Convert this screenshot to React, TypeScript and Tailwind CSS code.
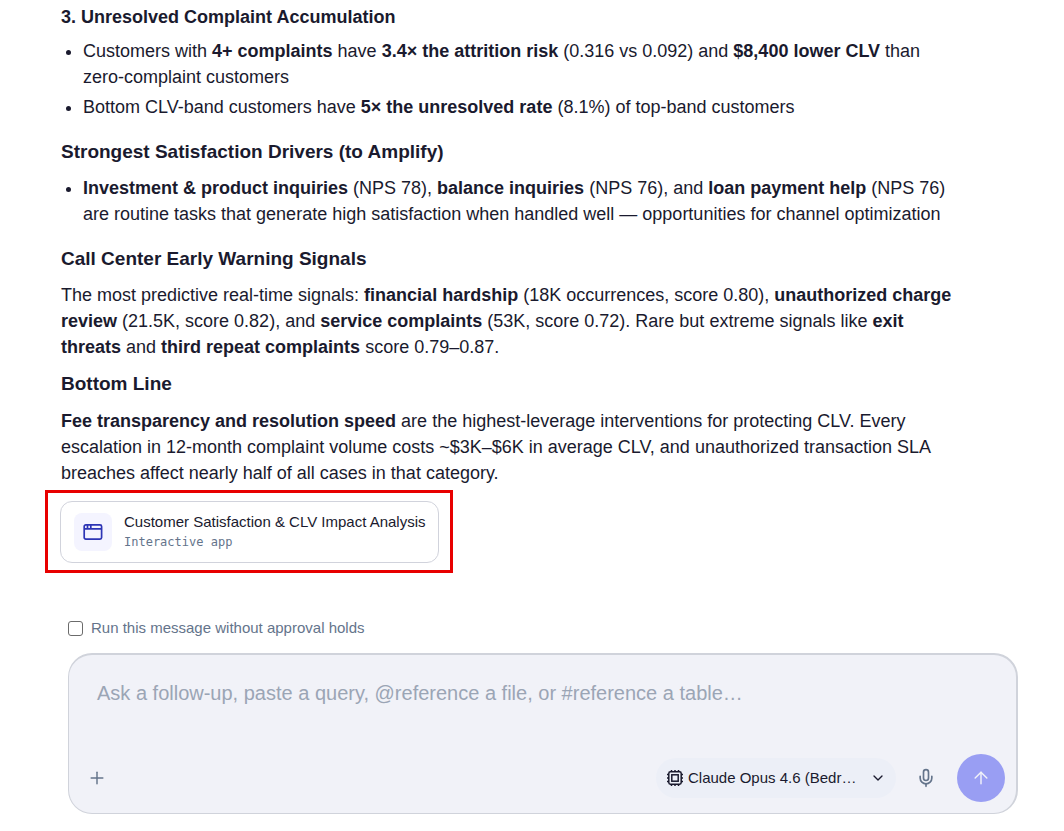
import { useState } from "react"
import type { ReactNode } from "react"
import { ArrowUp, ChevronDown, Mic, Plus } from "lucide-react"

function AppWindowIcon() {
  return (
    <svg viewBox="0 0 20 20" className="size-5" fill="none" stroke="currentColor" strokeWidth="1.7" aria-hidden="true">
      <rect x="1.2" y="2.8" width="17.4" height="14.4" rx="1.6" />
      <path d="M1.2 6.8h17.4M4.5 2.8v4M7.8 2.8v4" />
    </svg>
  )
}

function ChipIcon() {
  return (
    <svg viewBox="0 0 18 18" className="size-[18px] shrink-0" fill="none" stroke="currentColor" strokeWidth="1.5" aria-hidden="true">
      <rect x="2.8" y="2.8" width="12.4" height="12.4" rx="1.6" />
      <rect x="5.8" y="5.8" width="6.4" height="6.4" />
      <path d="M5.5 1v2M9 1v2M12.5 1v2M5.5 15v2M9 15v2M12.5 15v2M1 5.5h2M1 9h2M1 12.5h2M15 5.5h2M15 9h2M15 12.5h2" />
    </svg>
  )
}

function SectionHeading({ children }: { children: ReactNode }) {
  return <h2 className="mt-[18px] mb-[9px] text-[19px] leading-7 font-bold">{children}</h2>
}

function Bullets({ children }: { children: ReactNode }) {
  return <ul className="list-disc space-y-1 pl-[22px]">{children}</ul>
}

function Answer() {
  return (
    <article className="max-w-[896px] text-lg leading-[26px]">
      <h3 className="mb-2 font-bold">3. Unresolved Complaint Accumulation</h3>
      <Bullets>
        <li>
          Customers with <strong>4+ complaints</strong> have <strong>3.4× the attrition risk</strong> (0.316 vs 0.092) and{" "}
          <strong>$8,400 lower CLV</strong> than zero-complaint customers
        </li>
        <li>
          Bottom CLV-band customers have <strong>5× the unresolved rate</strong> (8.1%) of top-band customers
        </li>
      </Bullets>

      <SectionHeading>Strongest Satisfaction Drivers (to Amplify)</SectionHeading>
      <Bullets>
        <li>
          <strong>Investment &amp; product inquiries</strong> (NPS 78), <strong>balance inquiries</strong> (NPS 76), and{" "}
          <strong>loan payment help</strong> (NPS 76) are routine tasks that generate high satisfaction when handled well —
          opportunities for channel optimization
        </li>
      </Bullets>

      <SectionHeading>Call Center Early Warning Signals</SectionHeading>
      <p>
        The most predictive real-time signals: <strong>financial hardship</strong> (18K occurrences, score 0.80),{" "}
        <strong>unauthorized charge review</strong> (21.5K, score 0.82), and <strong>service complaints</strong> (53K, score
        0.72). Rare but extreme signals like <strong>exit threats</strong> and <strong>third repeat complaints</strong> score
        0.79–0.87.
      </p>

      <h2 className="my-2.5 text-[19px] leading-7 font-bold">Bottom Line</h2>
      <p>
        <strong>Fee transparency and resolution speed</strong> are the highest-leverage interventions for protecting CLV.
        Every escalation in 12-month complaint volume costs ~$3K–$6K in average CLV, and unauthorized transaction SLA breaches
        affect nearly half of all cases in that category.
      </p>
    </article>
  )
}

function AppCard() {
  return (
    <div className="-ml-4 mt-1 w-fit border-3 border-[#e80000] pt-2 pr-[11px] pb-[7px] pl-3">
      <button type="button" className="flex items-center gap-3 rounded-xl border border-[#d1d3dc] bg-white py-2.5 pr-3 pl-[13px] text-left">
        <span className="flex size-[38px] items-center justify-center rounded-lg bg-[#f4f4ff] text-[#2d35b5]">
          <AppWindowIcon />
        </span>
        <span className="flex flex-col">
          <span className="text-[15px] leading-5">Customer Satisfaction &amp; CLV Impact Analysis</span>
          <span className="font-['DejaVu_Sans_Mono','Liberation_Mono',monospace] text-xs leading-5 text-[#64748b]">
            Interactive app
          </span>
        </span>
      </button>
    </div>
  )
}

function Composer() {
  const [message, setMessage] = useState("")
  const [skipHolds, setSkipHolds] = useState(false)

  return (
    <form className="mt-[45px] mr-[46px] ml-[7px]" onSubmit={(e) => e.preventDefault()}>
      <label className="flex w-fit items-center gap-2 text-[15px] leading-5 text-[#64748b]">
        <input
          type="checkbox"
          checked={skipHolds}
          onChange={(e) => setSkipHolds(e.target.checked)}
          className="size-[15px] appearance-none rounded-[3px] border border-[#6b6b6b] bg-white checked:bg-[#6366f1]"
        />
        Run this message without approval holds
      </label>

      <div className="mt-[15px] rounded-3xl border border-t-2 border-r-2 border-[#d0d3db] bg-[#f1f2f8] pt-6 pr-[11px] pb-[11px] pl-[18px]">
        <textarea
          aria-label="Message"
          rows={2}
          value={message}
          onChange={(e) => setMessage(e.target.value)}
          placeholder="Ask a follow-up, paste a query, @reference a file, or #reference a table…"
          className="block h-[75px] w-full resize-none bg-transparent px-2.5 text-xl leading-7 outline-none placeholder:text-[#9ba5b5]"
        />
        <div className="flex items-center">
          <button type="button" aria-label="Add attachment" className="flex size-5 items-center justify-center text-[#64748b]">
            <Plus size={20} strokeWidth={1.75} />
          </button>
          <button
            type="button"
            className="ml-auto flex h-10 w-[240px] items-center gap-1 rounded-full bg-[#eceff7] px-2.5 text-[15px]"
          >
            <ChipIcon />
            <span className="grow text-left">Claude Opus 4.6 (Bedr…</span>
            <ChevronDown size={16} />
          </button>
          <button type="button" aria-label="Dictate" className="mr-[21px] ml-5 flex size-5 items-center justify-center text-[#64748b]">
            <Mic size={20} strokeWidth={2} />
          </button>
          <button
            type="submit"
            aria-label="Send"
            className="flex size-12 items-center justify-center rounded-full bg-[#999ef3] text-[#f1f2f8]"
          >
            <ArrowUp size={20} strokeWidth={1.75} />
          </button>
        </div>
      </div>
    </form>
  )
}

export default function App() {
  return (
    <main className="min-h-screen bg-white pt-1 pb-4 pl-[61px] font-['Liberation_Sans',Arial,sans-serif] text-[#1a1a2e]">
      <Answer />
      <AppCard />
      <Composer />
    </main>
  )
}
